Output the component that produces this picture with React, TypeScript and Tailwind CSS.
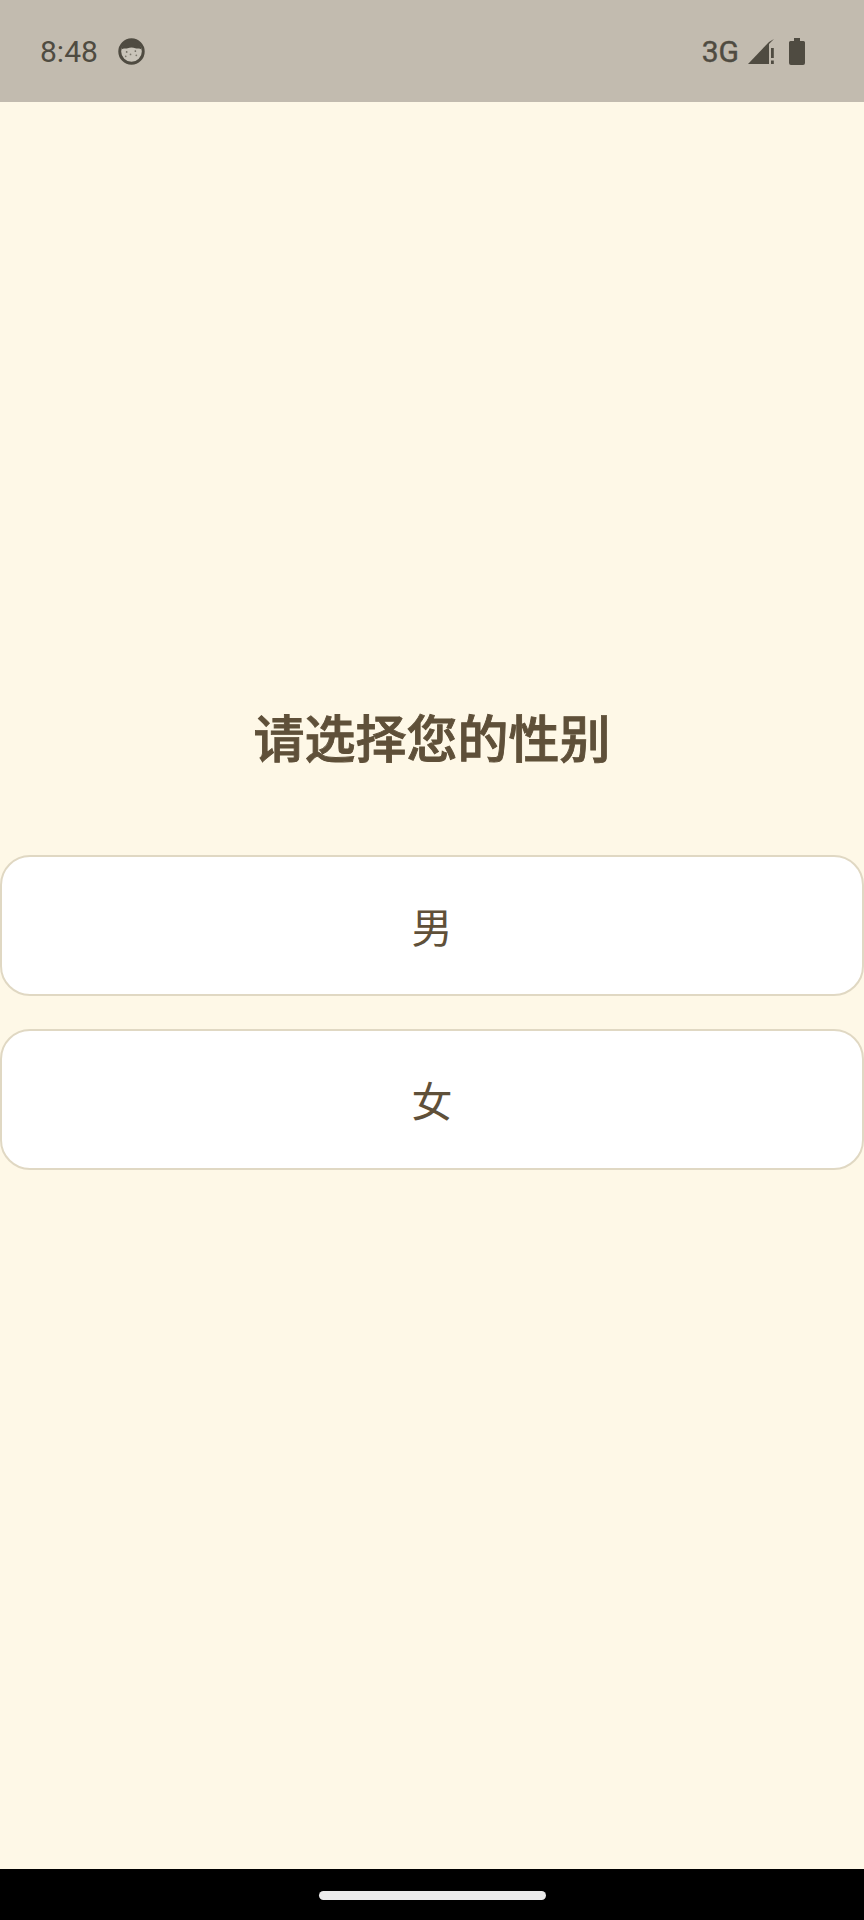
import React from 'react';

const CJK = 'font-["Roboto","Noto_Sans_CJK_SC",sans-serif]';

const StatusFace = () => (
  <svg width="27" height="27" viewBox="0 0 28 28" className="mt-[1px]">
    <circle cx="14" cy="14" r="12.2" fill="#c9c4b9" stroke="#4f4b41" strokeWidth="3" />
    <path d="M3.5 12 C4.5 5 10 2 14 2 C18 2 23.5 5 24.5 12 C22 10 20 11.5 18 10.5 C15.5 9.8 12.5 9.8 10 10.5 C8 11.5 6 10 3.5 12 Z" fill="#4f4b41" />
    <circle cx="9" cy="14.5" r="0.9" fill="#6f6b60" />
    <circle cx="18" cy="13.5" r="0.9" fill="#6f6b60" />
    <circle cx="13" cy="17" r="0.9" fill="#7d796e" />
    <circle cx="19" cy="18" r="0.9" fill="#7d796e" />
    <circle cx="8" cy="19" r="0.9" fill="#7d796e" />
  </svg>
);

const Signal = () => (
  <svg width="26" height="25" viewBox="0 0 26 25">
    <path d="M0 25 L21 3 L21 25 Z" fill="#4f4b41" />
    <path d="M21 3 L26 0 L21 5 Z" fill="#4f4b41" />
    <rect x="23" y="9" width="2.8" height="10" fill="#4f4b41" />
    <rect x="23" y="21.5" width="2.8" height="3.5" fill="#4f4b41" />
  </svg>
);

const BatteryFull = () => (
  <svg width="16" height="27" viewBox="0 0 16 27">
    <path d="M5 0 H11 V3 H14.5 Q16 3 16 4.5 V25 Q16 27 14 27 H2 Q0 27 0 25 V4.5 Q0 3 1.5 3 H5 Z" fill="#4f4b41" />
  </svg>
);

const OptionButton = ({ label }: { label: string }) => (
  <button className={`w-full h-[141px] bg-white border-2 border-[#e0d8c3] rounded-[30px] flex items-center justify-center pt-[7px] text-[41px] leading-none text-[#5f5039] ${CJK}`}>
    {label}
  </button>
);

const App: React.FC = () => {
  return (
    <div className="w-[864px] h-[1920px] flex flex-col bg-[#fef8e7] overflow-hidden">
      <div className="h-[102px] bg-[#c2bbaf] flex items-center justify-between pl-10 pr-[59px] shrink-0">
        <div className="flex items-center gap-[20px]">
          <span className='text-[30px] text-[#4f4b41] font-["Roboto",sans-serif]'>8:48</span>
          <StatusFace />
        </div>
        <div className="flex items-center">
          <span className='text-[30px] text-[#4f4b41] mr-[9px] [-webkit-text-stroke:0.4px_#4f4b41] font-["Roboto",sans-serif]'>3G</span>
          <Signal />
          <span className="ml-[15px] flex"><BatteryFull /></span>
        </div>
      </div>

      <div className="flex-1 flex flex-col pt-[604px]">
        <h1 className={`text-center text-[51px] leading-[70px] font-medium text-[#5f5039] mb-[79px] [-webkit-text-stroke:0.9px_#5f5039] ${CJK}`}>
          请选择您的性别
        </h1>
        <div className="flex flex-col gap-[33px]">
          <OptionButton label="男" />
          <OptionButton label="女" />
        </div>
      </div>

      <div className="h-[51px] bg-black flex items-center justify-center shrink-0 pt-[1px]">
        <div className="w-[227px] h-[9px] bg-[#ebebeb] rounded-full" />
      </div>
    </div>
  );
};

export default App;
